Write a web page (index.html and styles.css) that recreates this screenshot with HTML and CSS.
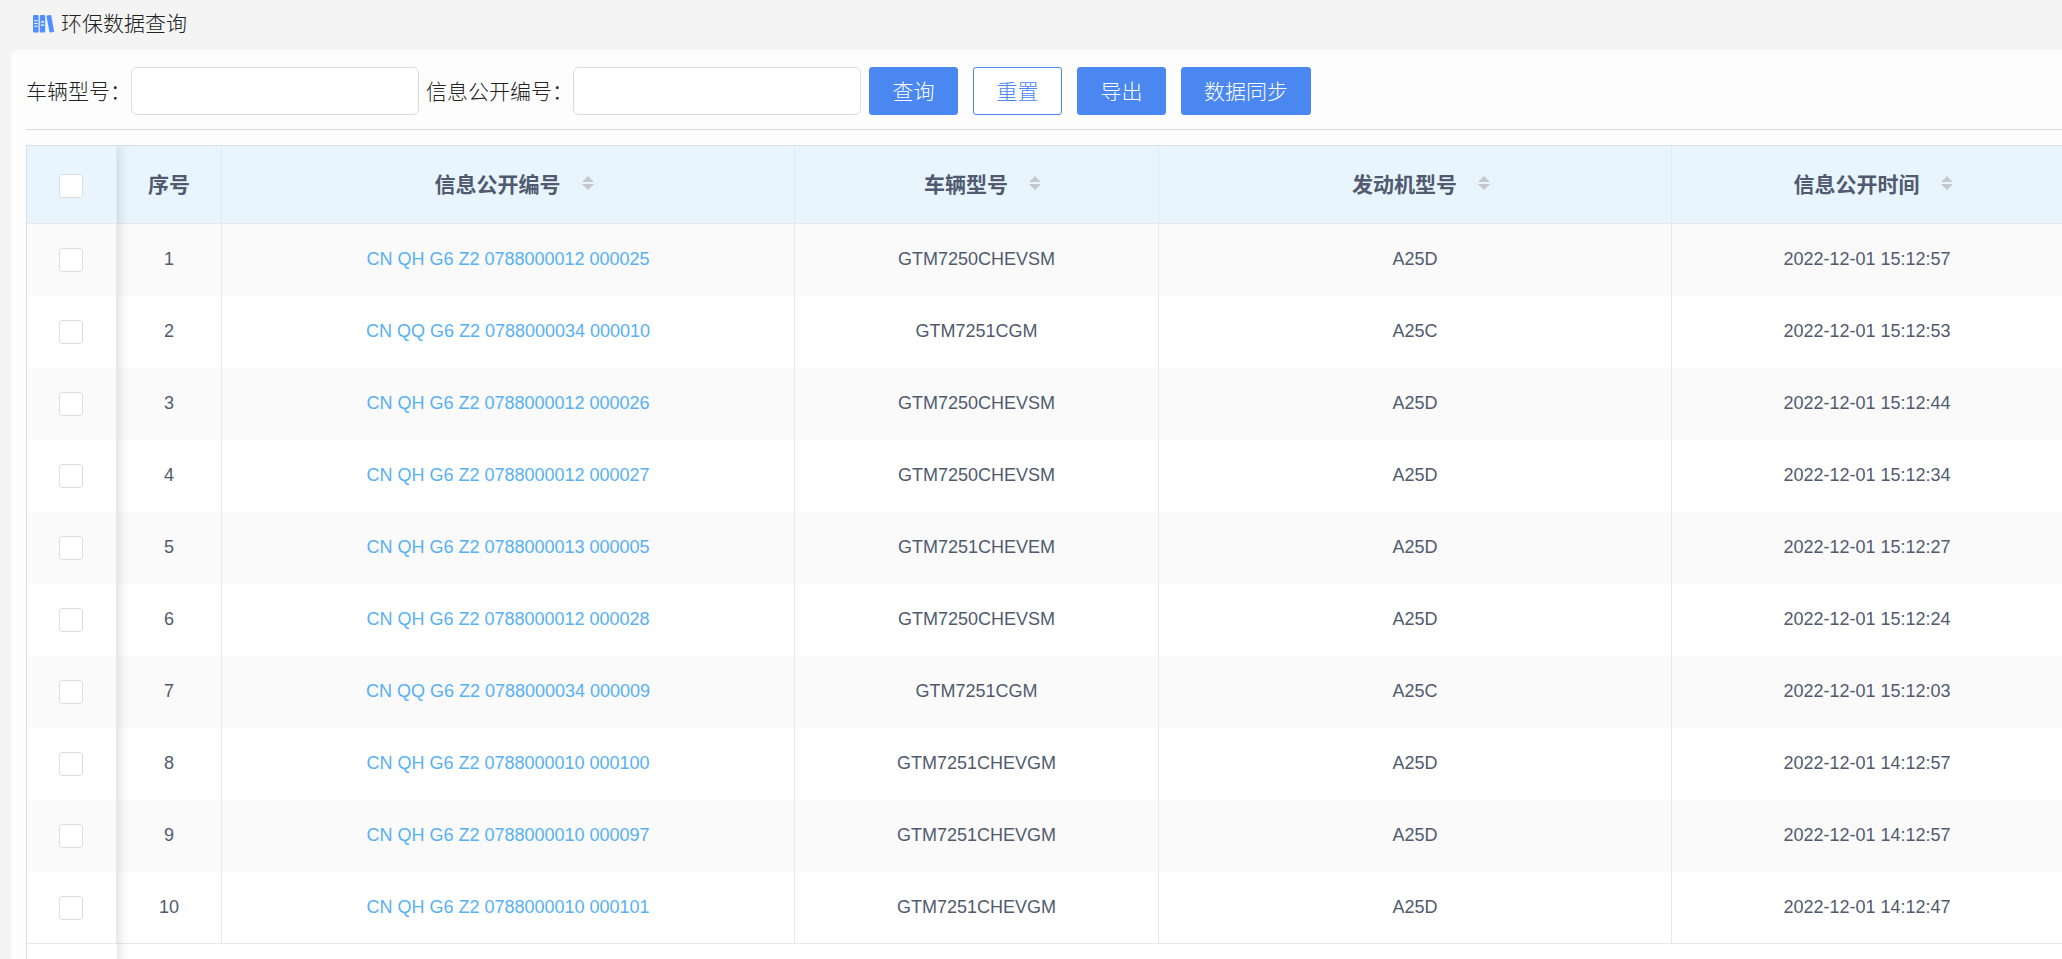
FILE: index.html
```html
<!DOCTYPE html>
<html lang="zh-CN">
<head>
<meta charset="utf-8">
<title>环保数据查询</title>
<link rel="stylesheet" href="styles.css">
</head>
<body>
<header class="page-head">
  <svg class="page-icon" width="22" height="18" viewBox="0 0 22 18" aria-hidden="true">
    <rect x="0" y="0" width="5.600" height="17.500" rx="1" fill="#4f8fff"/>
    <rect x="6.800" y="0" width="5.400" height="17.500" rx="1" fill="#4f8fff"/>
    <path d="M14.300.6 17.300.1q.8-.1 1 .7L21 15.900q.1.8-.7 1L17.500 17.400q-.8.1-1-.7L13.500 1.600q-.1-.8.8-1z" fill="#4f8fff"/>
    <path d="M1.200 5.700h3.400M1.200 8.500h3.400M1.200 11.300h3.400M7.800 6.900h3.400M7.800 10.100h3.400" stroke="#fff" stroke-width="1.100"/>
  </svg>
  <h1 class="page-title">环保数据查询</h1>
</header>
<main class="panel">
  <form class="search">
    <div class="field"><label for="model">车辆型号：</label><input class="field-input" id="model" type="text"></div>
    <div class="field"><label for="code">信息公开编号：</label><input class="field-input" id="code" type="text"></div>
    <div class="actions">
      <button class="btn" type="button">查询</button>
      <button class="btn btn-plain" type="button">重置</button>
      <button class="btn" type="button">导出</button>
      <button class="btn" type="button">数据同步</button>
    </div>
  </form>
  <div class="table-wrap">
    <table class="grid">
      <colgroup><col class="c-check"><col class="c-index"><col class="c-code"><col class="c-model"><col class="c-engine"><col></colgroup>
      <thead>
        <tr>
          <th><input class="check" type="checkbox" aria-label="全选"></th>
          <th>序号</th>
          <th class="sortable"><span class="sort">信息公开编号<svg width="12" height="16" viewBox="0 0 12 16" aria-hidden="true"><path d="M0 7 6 1l6 6zM0 9h12l-6 6z"/></svg></span></th>
          <th class="sortable"><span class="sort">车辆型号<svg width="12" height="16" viewBox="0 0 12 16" aria-hidden="true"><path d="M0 7 6 1l6 6zM0 9h12l-6 6z"/></svg></span></th>
          <th class="sortable"><span class="sort">发动机型号<svg width="12" height="16" viewBox="0 0 12 16" aria-hidden="true"><path d="M0 7 6 1l6 6zM0 9h12l-6 6z"/></svg></span></th>
          <th class="sortable"><span class="sort">信息公开时间<svg width="12" height="16" viewBox="0 0 12 16" aria-hidden="true"><path d="M0 7 6 1l6 6zM0 9h12l-6 6z"/></svg></span></th>
        </tr>
      </thead>
      <tbody>
        <tr><td><input class="check" type="checkbox" aria-label="选择 1"></td><td>1</td><td><a href="#">CN QH G6 Z2 0788000012 000025</a></td><td>GTM7250CHEVSM</td><td>A25D</td><td>2022-12-01 15:12:57</td></tr>
        <tr><td><input class="check" type="checkbox" aria-label="选择 2"></td><td>2</td><td><a href="#">CN QQ G6 Z2 0788000034 000010</a></td><td>GTM7251CGM</td><td>A25C</td><td>2022-12-01 15:12:53</td></tr>
        <tr><td><input class="check" type="checkbox" aria-label="选择 3"></td><td>3</td><td><a href="#">CN QH G6 Z2 0788000012 000026</a></td><td>GTM7250CHEVSM</td><td>A25D</td><td>2022-12-01 15:12:44</td></tr>
        <tr><td><input class="check" type="checkbox" aria-label="选择 4"></td><td>4</td><td><a href="#">CN QH G6 Z2 0788000012 000027</a></td><td>GTM7250CHEVSM</td><td>A25D</td><td>2022-12-01 15:12:34</td></tr>
        <tr><td><input class="check" type="checkbox" aria-label="选择 5"></td><td>5</td><td><a href="#">CN QH G6 Z2 0788000013 000005</a></td><td>GTM7251CHEVEM</td><td>A25D</td><td>2022-12-01 15:12:27</td></tr>
        <tr><td><input class="check" type="checkbox" aria-label="选择 6"></td><td>6</td><td><a href="#">CN QH G6 Z2 0788000012 000028</a></td><td>GTM7250CHEVSM</td><td>A25D</td><td>2022-12-01 15:12:24</td></tr>
        <tr><td><input class="check" type="checkbox" aria-label="选择 7"></td><td>7</td><td><a href="#">CN QQ G6 Z2 0788000034 000009</a></td><td>GTM7251CGM</td><td>A25C</td><td>2022-12-01 15:12:03</td></tr>
        <tr><td><input class="check" type="checkbox" aria-label="选择 8"></td><td>8</td><td><a href="#">CN QH G6 Z2 0788000010 000100</a></td><td>GTM7251CHEVGM</td><td>A25D</td><td>2022-12-01 14:12:57</td></tr>
        <tr><td><input class="check" type="checkbox" aria-label="选择 9"></td><td>9</td><td><a href="#">CN QH G6 Z2 0788000010 000097</a></td><td>GTM7251CHEVGM</td><td>A25D</td><td>2022-12-01 14:12:57</td></tr>
        <tr><td><input class="check" type="checkbox" aria-label="选择 10"></td><td>10</td><td><a href="#">CN QH G6 Z2 0788000010 000101</a></td><td>GTM7251CHEVGM</td><td>A25D</td><td>2022-12-01 14:12:47</td></tr>
      </tbody>
    </table>
  </div>
</main>
</body>
</html>
```
FILE: styles.css
```css
* { box-sizing: border-box; }

body {
  margin: 0;
  min-height: 100vh;
  display: flex;
  flex-direction: column;
  background: #f4f4f4;
  color: #222;
  font-family: "Liberation Sans", "Noto Sans CJK SC", sans-serif;
  font-size: 21px;
  font-weight: 300;
}

.page-head {
  display: flex;
  align-items: center;
  gap: 6px;
  height: 50px;
  padding: 0 33px 3px;
}

.page-title {
  margin: 0;
  font-size: 21px;
  font-weight: 300;
  line-height: 30px;
}

.panel {
  flex: 1;
  display: flex;
  flex-direction: column;
  margin-left: 11px;
  padding: 17px 0 0 15px;
  background: #fdfdfd;
  border-top-left-radius: 6px;
}

.search {
  display: flex;
  flex-wrap: wrap;
  gap: 7px;
  padding-bottom: 14px;
  border-bottom: 1px solid #dcdcdc;
}

.field {
  display: flex;
  align-items: center;
}

.field label {
  padding-bottom: 3px;
  white-space: nowrap;
}

.field-input {
  width: 288px;
  height: 48px;
  padding: 0 15px;
  border: 1px solid #dcdcdc;
  border-radius: 6px;
  background: #fff;
  font: inherit;
}

.actions {
  display: flex;
  gap: 15px;
  margin-left: 1px;
}

.btn {
  min-width: 89px;
  height: 48px;
  padding: 0 22px 3px;
  border: 1px solid #4a87f0;
  border-radius: 3px;
  background: #4a87f0;
  color: #fff;
  font: inherit;
  white-space: nowrap;
}

.btn-plain {
  background: #fff;
  color: #4a87f0;
}

.table-wrap {
  position: relative;
  flex: 1;
  margin-top: 15px;
  border: solid #dcdee2;
  border-width: 1px 0 0 1px;
  background: #fff;
  overflow: hidden;
}

.table-wrap::after {
  content: "";
  position: absolute;
  top: 0;
  bottom: -20px;
  left: 0;
  width: 90px;
  box-shadow: 0 0 12px rgba(0, 0, 0, .18);
  pointer-events: none;
}

.grid {
  width: 100%;
  table-layout: fixed;
  border-collapse: separate;
  border-spacing: 0;
  color: #515a6e;
  text-align: center;
}

.c-check { width: 90px; }
.c-index { width: 105px; }
.c-code { width: 28.16%; }
.c-model { width: 17.89%; }
.c-engine { width: 25.21%; }

.grid th,
.grid td {
  padding: 0 0 2px;
  border-right: 1px solid #e8e8eb;
  vertical-align: middle;
}

.grid th:last-child,
.grid td:last-child { border-right: 0; }

.grid th {
  height: 78px;
  padding-bottom: 3px;
  border-bottom: 1px solid #e8e8eb;
  background: #e8f5ff;
  font-weight: 700;
}

.grid th:first-child { padding-bottom: 0; }

.grid th.sortable { padding-left: 12px; }

.grid td {
  height: 72px;
  font-size: 18px;
  font-weight: 400;
}

.grid tbody tr:nth-child(odd) { background: #fafafa; }

.grid tbody tr:last-child td {
  padding-bottom: 1px;
  border-bottom: 1px solid #e8e8eb;
}

.grid a {
  color: #57b1f5;
  text-decoration: none;
}

.sort {
  display: inline-flex;
  align-items: center;
  gap: 21px;
}

.sort svg { fill: #c5c8ce; }

.check {
  appearance: none;
  display: block;
  width: 24px;
  height: 24px;
  margin: 2px auto 0 32px;
  border: 1px solid #dcdee2;
  border-radius: 3px;
  background: #fff;
}
```
